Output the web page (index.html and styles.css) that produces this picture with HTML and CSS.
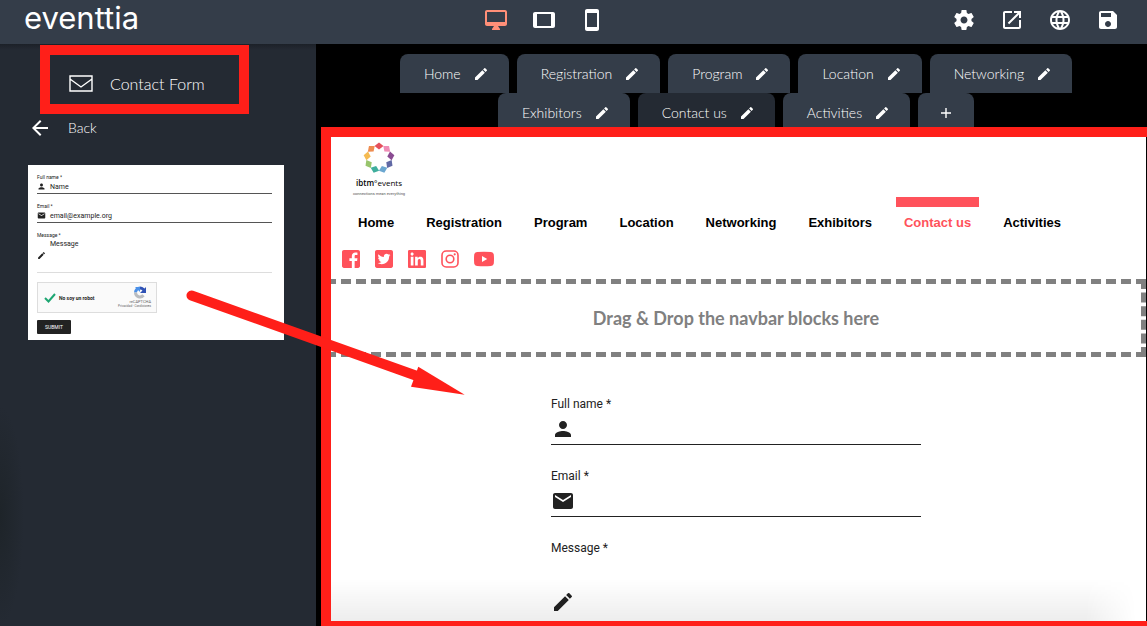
FILE: index.html
```html
<!DOCTYPE html>
<html lang="en">
<head>
<meta charset="utf-8">
<meta name="viewport" content="width=device-width, initial-scale=1">
<title>eventtia – Contact Form</title>
<link rel="stylesheet" href="styles.css">
</head>
<body>
<svg class="sprite" aria-hidden="true">
  <symbol id="pencil" viewBox="0 0 24 24"><path d="M3 17.25V21h3.75L17.81 9.94l-3.75-3.75L3 17.25zM20.71 7.04a1 1 0 0 0 0-1.41l-2.34-2.34a1 1 0 0 0-1.41 0l-1.83 1.83 3.75 3.75 1.83-1.83z"/></symbol>
  <symbol id="person" viewBox="0 0 24 24"><path d="M12 12c2.21 0 4-1.79 4-4s-1.79-4-4-4-4 1.79-4 4 1.79 4 4 4zm0 2c-2.67 0-8 1.34-8 4v2h16v-2c0-2.66-5.33-4-8-4z"/></symbol>
  <symbol id="mail" viewBox="0 0 24 24"><path d="M20 4H4c-1.1 0-1.99.9-1.99 2L2 18c0 1.1.9 2 2 2h16c1.1 0 2-.9 2-2V6c0-1.1-.9-2-2-2zm0 4l-8 5-8-5V6l8 5 8-5v2z"/></symbol>
</svg>

<header class="topbar">
  <a class="brand" href="#">eventtia</a>
  <div class="tools">
    <button class="tool tool-active" aria-label="Desktop view"><svg class="icon" viewBox="0 0 24 24"><path d="M21 2H3c-1.1 0-2 .9-2 2v12c0 1.1.9 2 2 2h7l-2 3v1h8v-1l-2-3h7c1.1 0 2-.9 2-2V4c0-1.1-.9-2-2-2zm0 12H3V4h18v10z"/></svg></button>
    <button class="tool" aria-label="Tablet view"><svg class="icon" viewBox="0 0 24 24"><path d="M21 4H3c-1.1 0-2 .9-2 2v12c0 1.1.9 2 2 2h18c1.1 0 1.99-.9 1.99-2L23 6c0-1.1-.9-2-2-2zm-2 14H5V6h14v12z"/></svg></button>
    <button class="tool" aria-label="Phone view"><svg class="icon" viewBox="0 0 24 24"><path d="M17 1.01L7 1c-1.1 0-1.99.9-1.99 2v18c0 1.1.89 2 1.99 2h10c1.1 0 2-.9 2-2V3c0-1.1-.9-1.99-2-1.99zM17 19H7V5h10v14z"/></svg></button>
  </div>
  <div class="tools">
    <button class="tool" aria-label="Settings"><svg class="icon" viewBox="0 0 24 24"><path d="M19.43 12.98c.04-.32.07-.64.07-.98s-.03-.66-.07-.98l2.11-1.65c.19-.15.24-.42.12-.64l-2-3.46c-.12-.22-.39-.3-.61-.22l-2.49 1c-.52-.4-1.08-.73-1.69-.98l-.38-2.65C14.46 2.18 14.25 2 14 2h-4c-.25 0-.46.18-.49.42l-.38 2.65c-.61.25-1.17.59-1.69.98l-2.49-1c-.23-.09-.49 0-.61.22l-2 3.46c-.13.22-.07.49.12.64l2.11 1.65c-.04.32-.07.65-.07.98s.03.66.07.98l-2.11 1.65c-.19.15-.24.42-.12.64l2 3.46c.12.22.39.3.61.22l2.49-1c.52.4 1.08.73 1.69.98l.38 2.65c.03.24.24.42.49.42h4c.25 0 .46-.18.49-.42l.38-2.65c.61-.25 1.17-.59 1.69-.98l2.49 1c.23.09.49 0 .61-.22l2-3.46c.12-.22.07-.49-.12-.64l-2.11-1.65zM12 15.5c-1.93 0-3.5-1.57-3.5-3.5s1.57-3.5 3.5-3.5 3.5 1.57 3.5 3.5-1.57 3.5-3.5 3.5z"/></svg></button>
    <button class="tool" aria-label="Open in new window"><svg class="icon" viewBox="0 0 24 24"><path d="M19 19H5V5h7V3H5c-1.11 0-2 .9-2 2v14c0 1.1.89 2 2 2h14c1.1 0 2-.9 2-2v-7h-2v7zM14 3v2h3.59l-9.83 9.83 1.41 1.41L19 6.41V10h2V3h-7z"/></svg></button>
    <button class="tool" aria-label="Language"><svg class="icon" viewBox="0 0 24 24"><path d="M11.99 2C6.47 2 2 6.48 2 12s4.47 10 9.99 10C17.52 22 22 17.52 22 12S17.52 2 11.99 2zm6.93 6h-2.95c-.32-1.25-.78-2.45-1.38-3.56 1.84.63 3.37 1.91 4.33 3.56zM12 4.04c.83 1.2 1.48 2.53 1.91 3.96h-3.82c.43-1.43 1.08-2.76 1.91-3.96zM4.26 14C4.1 13.36 4 12.69 4 12s.1-1.36.26-2h3.38c-.08.66-.14 1.32-.14 2s.06 1.34.14 2H4.26zm.82 2h2.95c.32 1.25.78 2.45 1.38 3.56-1.84-.63-3.37-1.9-4.33-3.56zm2.95-8H5.08c.96-1.66 2.49-2.93 4.33-3.56C8.81 5.55 8.35 6.75 8.03 8zM12 19.96c-.83-1.2-1.48-2.53-1.91-3.96h3.82c-.43 1.43-1.08 2.76-1.91 3.96zM14.34 14H9.66c-.09-.66-.16-1.32-.16-2s.07-1.35.16-2h4.68c.09.65.16 1.32.16 2s-.07 1.34-.16 2zm.25 5.56c.6-1.11 1.06-2.31 1.38-3.56h2.95c-.96 1.65-2.49 2.93-4.33 3.56zM16.36 14c.08-.66.14-1.32.14-2s-.06-1.34-.14-2h3.38c.16.64.26 1.31.26 2s-.1 1.36-.26 2h-3.38z"/></svg></button>
    <button class="tool" aria-label="Save"><svg class="icon" viewBox="0 0 24 24"><path d="M17 3H5c-1.11 0-2 .9-2 2v14c0 1.1.89 2 2 2h14c1.1 0 2-.9 2-2V7l-4-4zm-5 16c-1.66 0-3-1.34-3-3s1.34-3 3-3 3 1.34 3 3-1.34 3-3 3zm3-10H5V5h10v4z"/></svg></button>
  </div>
</header>

<div class="editor">
  <aside class="sidebar">
    <h1 class="panel-title">
      <svg class="envelope" viewBox="0 0 24 18"><path d="M1 1h22v15H1zM1 4l11 8L23 4"/></svg>
      Contact Form
    </h1>
    <button class="back">
      <svg class="icon" viewBox="0 0 24 24"><path d="M20 11H7.83l5.59-5.59L12 4l-8 8 8 8 1.41-1.41L7.83 13H20v-2z"/></svg>
      Back
    </button>
    <div class="block" draggable="true">
      <div class="mini-field">
        <span class="mini-label">Full name *</span>
        <div class="mini-row"><svg class="mini-icon"><use href="#person"/></svg>Name</div>
      </div>
      <div class="mini-field">
        <span class="mini-label">Email *</span>
        <div class="mini-row"><svg class="mini-icon"><use href="#mail"/></svg>email@example.org</div>
      </div>
      <div class="mini-field">
        <span class="mini-label">Message *</span>
        <div class="mini-row mini-area"><svg class="mini-icon"><use href="#pencil"/></svg><span class="mini-message">Message</span></div>
      </div>
      <div class="captcha">
        <svg class="check" viewBox="0 0 12 10"><path d="M1 5l3.500 3.500L11 1"/></svg>
        <span class="captcha-label">No soy un robot</span>
        <div class="captcha-brand">
          <svg class="captcha-logo" viewBox="0 0 14 13"><g fill="none" stroke-width="3"><path stroke="#2f52b5" d="M7 2a4.500 4.500 0 0 1 4.500 4.500"/><path stroke="#4a90e8" d="M2.500 6.500A4.500 4.500 0 0 1 7 2"/><path stroke="#b9bcc0" d="M2.500 6.500a4.500 4.500 0 0 0 8 2.800"/></g><path fill="#2f52b5" d="M13 1v6H7z"/><path fill="#4a90e8" d="M2 1h5v5z"/></svg>
          <span>reCAPTCHA</span>
          <span class="captcha-terms">Privacidad - Condiciones</span>
        </div>
      </div>
      <span class="mini-submit">SUBMIT</span>
    </div>
  </aside>

  <main class="workspace">
    <nav class="tabs" aria-label="Pages">
      <div class="tab"><a href="#">Home</a><button aria-label="Edit Home"><svg><use href="#pencil"/></svg></button></div>
      <div class="tab"><a href="#">Registration</a><button aria-label="Edit Registration"><svg><use href="#pencil"/></svg></button></div>
      <div class="tab"><a href="#">Program</a><button aria-label="Edit Program"><svg><use href="#pencil"/></svg></button></div>
      <div class="tab"><a href="#">Location</a><button aria-label="Edit Location"><svg><use href="#pencil"/></svg></button></div>
      <div class="tab"><a href="#">Networking</a><button aria-label="Edit Networking"><svg><use href="#pencil"/></svg></button></div>
      <div class="tab"><a href="#">Exhibitors</a><button aria-label="Edit Exhibitors"><svg><use href="#pencil"/></svg></button></div>
      <div class="tab tab-current"><a href="#">Contact us</a><button aria-label="Edit Contact us"><svg><use href="#pencil"/></svg></button></div>
      <div class="tab"><a href="#">Activities</a><button aria-label="Edit Activities"><svg><use href="#pencil"/></svg></button></div>
      <button class="tab tab-add" aria-label="Add page"><svg viewBox="0 0 10 10"><path d="M5 0v10M0 5h10"/></svg></button>
    </nav>

    <section class="site">
      <a class="site-logo" href="#">
        <svg class="ring" viewBox="-16 -16 32 32">
          <defs><path id="gem" d="M-4.500-12L0-15.600 4.500-12 0-8.400z"/></defs>
          <use href="#gem" fill="#e5505c"/>
          <use href="#gem" fill="#ef8db6" transform="rotate(40)"/>
          <use href="#gem" fill="#8a4b92" transform="rotate(80)"/>
          <use href="#gem" fill="#6169a5" transform="rotate(120)"/>
          <use href="#gem" fill="#6ba7d0" transform="rotate(160)"/>
          <use href="#gem" fill="#3fae9c" transform="rotate(200)"/>
          <use href="#gem" fill="#98c46c" transform="rotate(240)"/>
          <use href="#gem" fill="#f5bb52" transform="rotate(280)"/>
          <use href="#gem" fill="#ee8c50" transform="rotate(320)"/>
        </svg>
        <span class="site-name"><b>ibtm</b>°events</span>
        <span class="site-tagline">connections mean everything</span>
      </a>
      <nav class="site-nav" aria-label="Site">
        <a href="#">Home</a>
        <a href="#">Registration</a>
        <a href="#">Program</a>
        <a href="#">Location</a>
        <a href="#">Networking</a>
        <a href="#">Exhibitors</a>
        <a class="current" href="#">Contact us</a>
        <a href="#">Activities</a>
      </nav>
      <div class="social">
        <a href="#" aria-label="Facebook"><svg viewBox="0 32 448 448"><path d="M448 80v352c0 26.500-21.500 48-48 48h-85.300V302.800h60.600l8.700-67.600h-69.300V192c0-19.600 5.400-32.900 33.500-32.900H384V98.700c-6.200-.8-27.400-2.700-52.200-2.700-51.600 0-87 31.500-87 89.400v49.900H184v67.600h60.900V480H48c-26.500 0-48-21.500-48-48V80c0-26.500 21.500-48 48-48h352c26.500 0 48 21.500 48 48z"/></svg></a>
        <a href="#" aria-label="Twitter"><svg viewBox="0 32 448 448"><path d="M400 32H48C21.500 32 0 53.500 0 80v352c0 26.500 21.500 48 48 48h352c26.500 0 48-21.500 48-48V80c0-26.500-21.500-48-48-48zm-48.900 158.800c.2 2.800.2 5.700.2 8.500 0 86.700-66 186.600-186.600 186.600-37.200 0-71.700-10.800-100.700-29.400 5.300.6 10.400.8 15.800.8 30.700 0 58.900-10.400 81.400-28-28.800-.6-53-19.500-61.300-45.500 10.100 1.500 19.200 1.500 29.600-1.200-30-6.100-52.500-32.500-52.500-64.400v-.8c8.700 4.900 18.900 7.900 29.600 8.300a65.447 65.447 0 0 1-29.200-54.600c0-12.200 3.200-23.400 8.900-33.100 32.300 39.800 80.800 65.800 135.200 68.600-9.300-44.500 24-80.600 64-80.600 18.900 0 35.900 7.900 47.900 20.700 14.800-2.800 29-8.300 41.600-15.800-4.900 15.200-15.200 28-28.800 36.100 13.200-1.400 26-5.100 37.800-10.200-8.900 13.100-20.100 24.700-32.900 34z"/></svg></a>
        <a href="#" aria-label="LinkedIn"><svg viewBox="0 32 448 448"><path d="M416 32H31.900C14.300 32 0 46.500 0 64.300v383.400C0 465.500 14.300 480 31.900 480H416c17.600 0 32-14.500 32-32.300V64.300c0-17.800-14.400-32.300-32-32.300zM135.400 416H69V202.200h66.500V416zm-33.200-243c-21.300 0-38.500-17.300-38.500-38.500S80.900 96 102.200 96c21.200 0 38.500 17.300 38.500 38.500 0 21.300-17.200 38.500-38.500 38.500zm282.100 243h-66.400V312c0-24.800-.5-56.700-34.500-56.700-34.600 0-39.900 27-39.900 54.900V416h-66.400V202.200h63.700v29.200h.9c8.900-16.800 30.600-34.500 62.900-34.500 67.200 0 79.700 44.300 79.700 101.900V416z"/></svg></a>
        <a href="#" aria-label="Instagram"><svg viewBox="0 0 18 18"><g fill="none" stroke="currentColor" stroke-width="1.600"><rect x="1" y="1" width="16" height="16" rx="4.200"/><circle cx="9" cy="9" r="3.800"/></g><circle cx="13.700" cy="4.300" r="1.100"/></svg></a>
        <a href="#" aria-label="YouTube"><svg class="wide" viewBox="0 0 20 18"><path fill-rule="evenodd" d="M3 2Q10 1.400 17 2 19.500 2.200 19.800 4.500 20.200 9 19.800 13.500 19.500 15.800 17 16 10 16.600 3 16 .5 15.800.2 13.500-.2 9 .2 4.500.5 2.200 3 2zM8 6v6l5.200-3z"/></svg></a>
      </div>
      <div class="dropzone">Drag &amp; Drop the navbar blocks here</div>
      <form class="contact">
        <div class="field">
          <label for="name">Full name *</label>
          <div class="control"><svg class="icon"><use href="#person"/></svg><input id="name" type="text"></div>
        </div>
        <div class="field">
          <label for="email">Email *</label>
          <div class="control"><svg class="icon"><use href="#mail"/></svg><input id="email" type="email"></div>
        </div>
        <div class="field">
          <label for="message">Message *</label>
          <div class="control control-area"><svg class="icon"><use href="#pencil"/></svg><textarea id="message"></textarea></div>
        </div>
      </form>
    </section>
    <div class="fade"></div>
    <div class="frame frame-site"></div>
  </main>
</div>

<div class="frame frame-title"></div>
<svg class="arrow" viewBox="0 0 280 106" aria-hidden="true">
  <path class="shaft" d="M6.500 6.500L232 87"/>
  <path d="M233.300 77.700L279.700 105.700 226 97.700z"/>
</svg>
</body>
</html>
```
FILE: styles.css
```css
* {
  box-sizing: border-box;
}

body {
  display: flex;
  flex-direction: column;
  height: 100vh;
  margin: 0;
  overflow: hidden;
  background: #000;
  color: #fff;
  font: 300 14px/20px Lato, "Open Sans", sans-serif;
}

a {
  color: inherit;
  text-decoration: none;
}

button {
  padding: 0;
  border: 0;
  background: none;
  color: inherit;
  font: inherit;
  cursor: pointer;
}

svg {
  display: block;
  fill: currentColor;
}

.sprite {
  position: absolute;
  width: 0;
  height: 0;
}

.icon {
  flex: none;
  width: 24px;
  height: 24px;
}

/* Top bar */

.topbar {
  z-index: 1;
  display: flex;
  flex: none;
  align-items: center;
  justify-content: space-between;
  height: 44px;
  padding: 0 15px 4px 24px;
  background: #343d49;
}

.brand {
  align-self: flex-start;
  min-width: 124px;
  font: 400 31px/36px Inter, sans-serif;
}

.tools {
  display: flex;
}

.tool {
  display: flex;
  justify-content: center;
  width: 48px;
}

.tool-active {
  color: #ff8f78;
}

.editor {
  display: flex;
  flex: 1;
  min-height: 0;
}

/* Sidebar */

.sidebar {
  flex: none;
  width: 316px;
  padding: 30px 32px 0 28px;
  background:
    radial-gradient(closest-side, #1e2429, transparent) -24px 100% / 48px 220px no-repeat,
    linear-gradient(#1c2128, #242a33 6px);
}

.panel-title {
  display: flex;
  align-items: center;
  gap: 17px;
  margin: 0;
  padding-left: 41px;
  font-size: 16px;
  font-weight: 300;
  line-height: 20px;
}

.envelope {
  width: 24px;
  height: 18px;
  fill: none;
  stroke: #fff;
  stroke-width: 1.4;
}

.back {
  display: flex;
  align-items: center;
  gap: 16px;
  margin: 22px 0 25px;
}

.block {
  padding: 9px 12px 6px 9px;
  background: #fff;
  color: #222;
  font: 7px/8px Roboto, sans-serif;
}

.mini-field {
  margin-bottom: 9px;
}

.mini-label {
  display: block;
  font-size: 5px;
  line-height: 6px;
}

.mini-row {
  display: flex;
  align-items: center;
  gap: 4px;
  height: 14px;
  border-bottom: 1px solid #555;
}

.mini-area {
  height: 35px;
  border-color: #ddd;
}

.mini-message {
  align-self: flex-start;
  padding-top: 2px;
}

.mini-icon {
  width: 9px;
  height: 9px;
}

.captcha {
  display: flex;
  align-items: center;
  gap: 3px;
  width: 120px;
  height: 31px;
  margin-bottom: 7px;
  padding: 0 5px 0 6px;
  border: 1px solid #ddd;
  background: #fafafa;
}

.check {
  width: 12px;
  height: 10px;
  fill: none;
  stroke: #1ea672;
  stroke-width: 2;
}

.captcha-label {
  font-size: 5px;
  font-weight: 700;
}

.captcha-brand {
  display: flex;
  flex-direction: column;
  align-items: flex-end;
  margin-left: auto;
  color: #666;
  font-size: 4px;
  line-height: 5px;
}

.captcha-logo {
  width: 14px;
  height: 13px;
  margin-right: 4px;
}

.captcha-terms {
  font-size: 3px;
}

.mini-submit {
  display: block;
  width: 34px;
  border-radius: 1px;
  background: #222;
  color: #fff;
  font-size: 5px;
  line-height: 14px;
  text-align: center;
}

/* Workspace */

.workspace {
  position: relative;
  display: flex;
  flex: 1;
  flex-direction: column;
  min-width: 0;
  padding: 10px 1px 0 10px;
}

.tabs {
  display: flex;
  flex: none;
  flex-wrap: wrap;
  justify-content: center;
  column-gap: 8px;
  padding: 0 32px;
}

.tab {
  display: flex;
  align-items: center;
  gap: 12px;
  height: 39px;
  padding: 0 20px 0 24px;
  border-radius: 8px 8px 0 0;
  background: #343d49;
}

.tab svg {
  width: 16px;
  height: 16px;
}

.tab-current {
  background: #242a33;
}

.tab-add {
  padding: 0 23px;
}

.tab-add svg {
  width: 10px;
  height: 10px;
  stroke: #fff;
  stroke-width: 1.4;
}

/* Edited site */

.site {
  flex: 1;
  min-height: 0;
  overflow: hidden;
  background: #fff;
  color: #000;
}

.site-logo {
  display: flex;
  flex-direction: column;
  align-items: center;
  width: 50px;
  margin: 9px 0 0 28px;
}

.ring {
  width: 32px;
  height: 34px;
}

.site-name {
  font: 8px/16px "Open Sans", sans-serif;
}

.site-name b {
  font-weight: 600;
}

.site-tagline {
  color: #555;
  font: 4px/6px Roboto, sans-serif;
  white-space: nowrap;
}

.site-nav {
  display: flex;
  gap: 16px;
  padding: 0 24px;
  font: bold 13px/32px "Liberation Sans", Arial, sans-serif;
}

.site-nav a {
  padding: 0 8px;
  border-top: 10px solid transparent;
}

.site-nav .current {
  border-color: #ff525b;
  color: #ff525b;
}

.social {
  display: flex;
  gap: 15px;
  padding: 11px 16px;
  color: #ff525b;
}

.social svg {
  width: 18px;
  height: 18px;
}

.social .wide {
  width: 20px;
}

.dropzone {
  border: 5px dashed #808080;
  color: #808080;
  font-size: 18px;
  font-weight: 700;
  line-height: 68px;
  text-align: center;
}

.contact {
  display: grid;
  gap: 23px;
  max-width: 370px;
  margin: 39px auto 0;
  color: #222;
  font: 12px/16px Roboto, sans-serif;
}

.field label {
  display: block;
}

.control {
  display: flex;
  align-items: center;
  height: 33px;
  padding-top: 1px;
  border-bottom: 1px solid #222;
}

.control-area {
  height: 91px;
}

.control input,
.control textarea {
  flex: 1;
  min-width: 0;
  height: 100%;
  padding: 0 8px;
  border: 0;
  outline: 0;
  background: none;
  font: inherit;
  resize: none;
}

.fade {
  position: absolute;
  right: 1px;
  bottom: 5px;
  left: 15px;
  height: 42px;
  background: linear-gradient(transparent, rgba(0, 0, 0, 0.07));
  mask-image: linear-gradient(to left, transparent 10px, #000 60px);
  pointer-events: none;
}

/* Tutorial annotations */

.frame {
  position: absolute;
  border: 10px solid #ff1f19;
  pointer-events: none;
}

.frame-site {
  inset: 83px 0 0 5px;
  border-right: 0;
  border-bottom-width: 5px;
}

.frame-title {
  z-index: 2;
  top: 45px;
  left: 40px;
  width: 209px;
  height: 69px;
}

.arrow {
  position: absolute;
  z-index: 2;
  top: 289px;
  left: 185px;
  width: 280px;
  height: 106px;
  fill: #ff1f19;
  pointer-events: none;
}

.shaft {
  stroke: #ff1f19;
  stroke-width: 10;
  stroke-linecap: round;
}
```
